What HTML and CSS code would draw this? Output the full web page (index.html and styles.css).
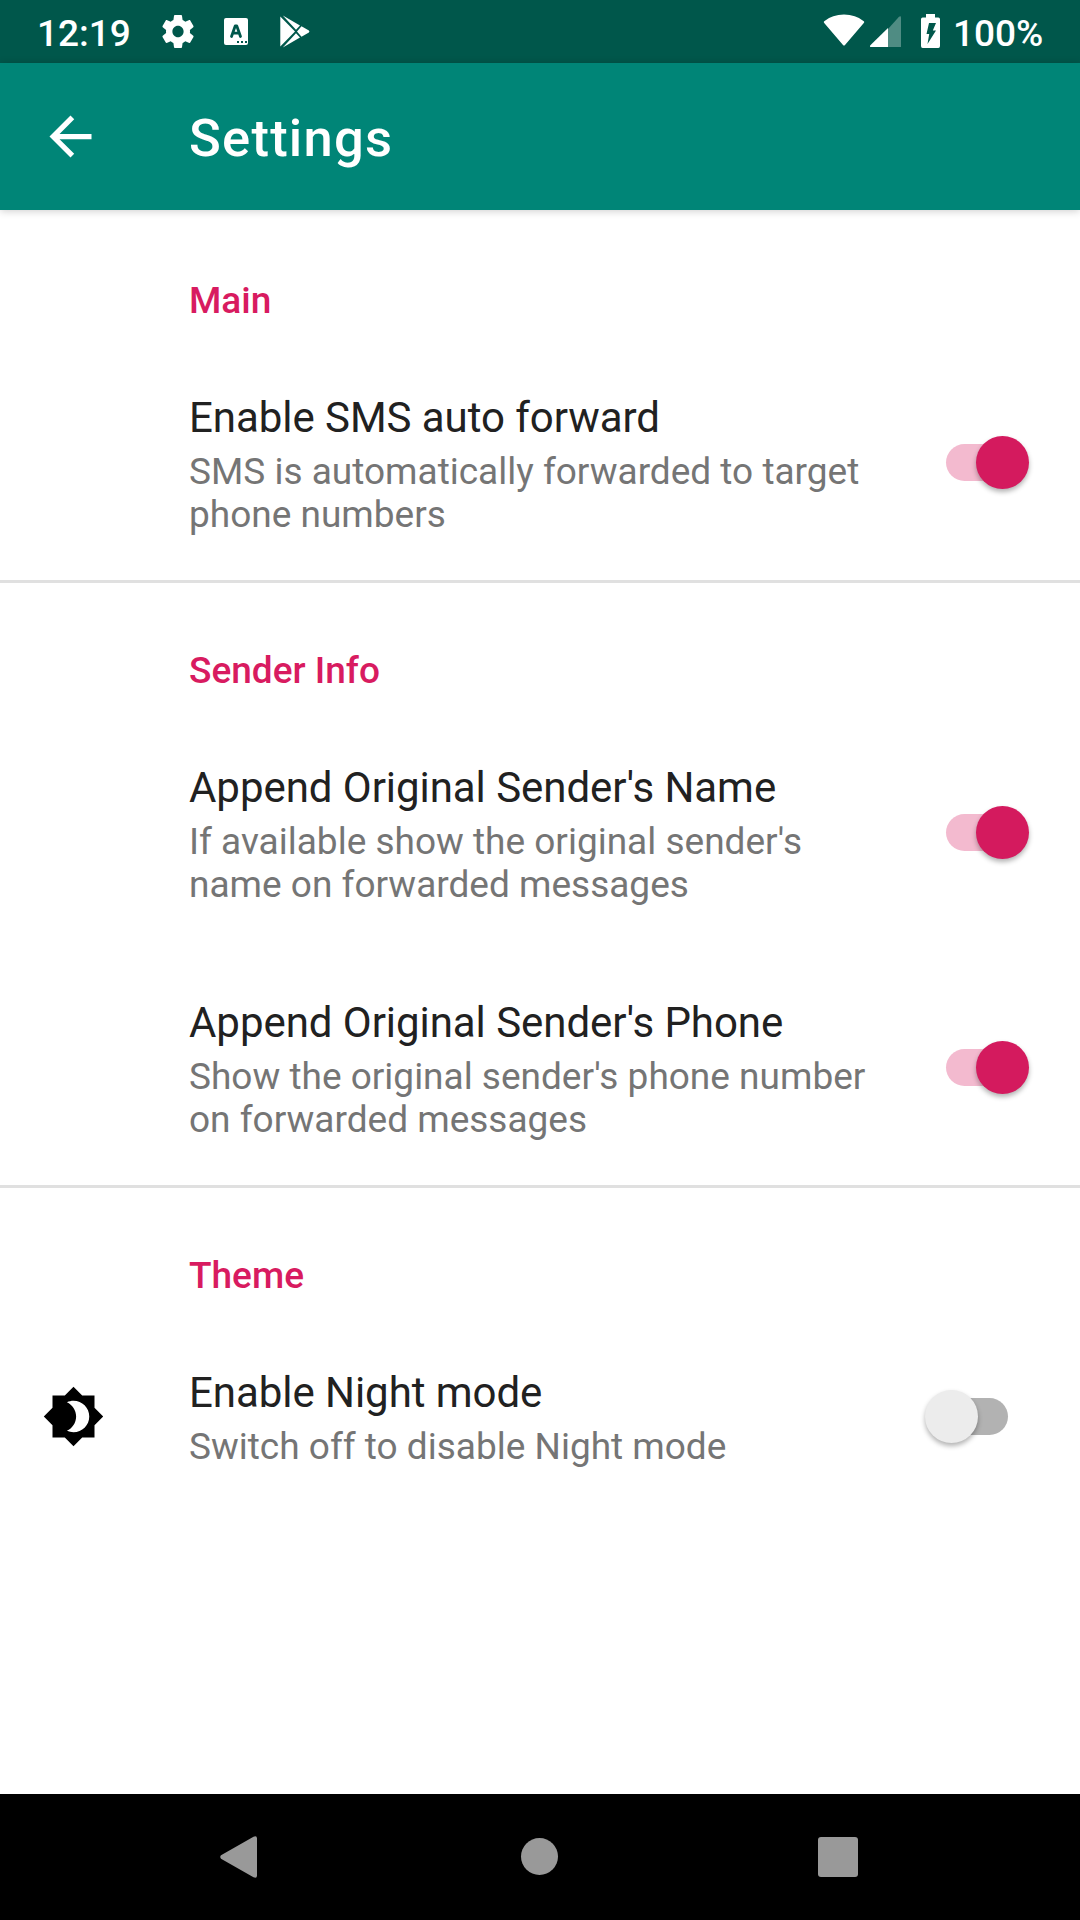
FILE: index.html
```html
<!DOCTYPE html>
<html lang="en">
<head>
<meta charset="utf-8">
<title>Settings</title>
<link rel="stylesheet" href="styles.css">
</head>
<body>
<header class="status-bar">
  <span class="clock">12:19</span>
  <svg class="status-gear" viewBox="2 2 20 20" preserveAspectRatio="none"><path d="M19.43 12.98c.04-.32.07-.64.07-.98s-.03-.66-.07-.98l2.11-1.65c.19-.15.24-.42.12-.64l-2-3.46c-.12-.22-.39-.3-.61-.22l-2.49 1c-.52-.4-1.08-.73-1.69-.98l-.38-2.65C14.46 2.18 14.25 2 14 2h-4c-.25 0-.46.18-.49.42l-.38 2.65c-.61.25-1.17.59-1.69.98l-2.49-1c-.23-.09-.49 0-.61.22l-2 3.46c-.13.22-.07.49.12.64l2.11 1.65c-.04.32-.07.65-.07.98s.03.66.07.98l-2.11 1.65c-.19.15-.24.42-.12.64l2 3.46c.12.22.39.3.61.22l2.49-1c.52.4 1.08.73 1.69.98l.38 2.65c.03.24.24.42.49.42h4c.25 0 .46-.18.49-.42l.38-2.65c.61-.25 1.17-.59 1.69-.98l2.49 1c.23.09.49 0 .61-.22l2-3.46c.12-.22.07-.49-.12-.64l-2.11-1.65zM12 15.5c-1.93 0-3.5-1.57-3.5-3.5s1.57-3.5 3.5-3.5 3.5 1.57 3.5 3.5-1.57 3.5-3.5 3.5z"/></svg>
  <svg class="status-input" viewBox="0 0 24 27"><rect width="24" height="27" rx="2"/><path class="cut-line" d="M7.500 18.500 11.200 8h1.600l3.700 10.500M9 15.200h6"/><path class="cut" d="M13 23h2v2h-2zM17 23h2v2h-2zM21 23h2v2h-2z"/></svg>
  <svg class="status-play" viewBox="0 0 30 33"><path d="M.3 1.500 15 16.500.3 31.500zM2.800.4 20 10.400l-4 4.400zM2.800 32.600 20 22.600l-4-4.400zM21.500 11.300l7.400 4.300q1 .9 0 1.800l-7.400 4.300-4.500-5.200z"/></svg>
  <span class="spacer"></span>
  <svg class="status-wifi" viewBox="0 0 42 33"><path d="M1.200 9Q.2 8 1.200 7.200Q9.500.6 21 .6T40.800 7.200Q41.800 8 40.800 9L22 31q-1 1-2 0z"/></svg>
  <svg class="status-signal" viewBox="0 0 31 31"><path class="faint" d="M18 13 29 .8Q31 -.6 31 1.500V31H18z"/><path d="M18 12V31H1Q-.8 30.800 .6 29z"/></svg>
  <svg class="status-battery" viewBox="0 0 19 34"><path d="M5 0h9v3.500h3.300Q19 3.500 19 5.200v26.800Q19 34 17.300 34H1.700Q0 34 0 32V5.200Q0 3.500 1.700 3.500H5z"/><path class="cut" d="M8 9h7l-3.200 7.500H15L6.500 30l1.700-10H5.500z"/></svg>
  <span class="battery-level">100%</span>
</header>
<nav class="app-bar">
  <svg class="back" viewBox="0 0 24 24"><path d="M20 11H7.830l5.590-5.590L12 4l-8 8 8 8 1.410-1.410L7.830 13H20v-2z"/></svg>
  <h1 class="app-title">Settings</h1>
</nav>
<main class="preferences">
  <section class="category">
    <h2 class="category-title">Main</h2>
    <div class="preference">
      <div class="icon-slot"></div>
      <div class="copy"><div class="title">Enable SMS auto forward</div><div class="summary">SMS is automatically forwarded to target<br>phone numbers</div></div>
      <div class="switch on"><span class="thumb"></span></div>
    </div>
  </section>
  <section class="category divided">
    <h2 class="category-title">Sender Info</h2>
    <div class="preference">
      <div class="icon-slot"></div>
      <div class="copy"><div class="title">Append Original Sender's Name</div><div class="summary">If available show the original sender's<br>name on forwarded messages</div></div>
      <div class="switch on"><span class="thumb"></span></div>
    </div>
    <div class="preference">
      <div class="icon-slot"></div>
      <div class="copy"><div class="title">Append Original Sender's Phone</div><div class="summary">Show the original sender's phone number<br>on forwarded messages</div></div>
      <div class="switch on"><span class="thumb"></span></div>
    </div>
  </section>
  <section class="category divided">
    <h2 class="category-title">Theme</h2>
    <div class="preference">
      <div class="icon-slot"><svg class="night" viewBox="0 0 24 24"><path d="M20 8.690V4h-4.690L12 .690 8.690 4H4v4.690L.690 12 4 15.310V20h4.690L12 23.310 15.310 20H20v-4.690L23.310 12 20 8.690zM12 18c-.890 0-1.740-.200-2.500-.550C11.560 16.500 13 14.420 13 12s-1.440-4.500-3.500-5.450C10.260 6.200 11.110 6 12 6c3.310 0 6 2.690 6 6s-2.690 6-6 6z"/></svg></div>
      <div class="copy"><div class="title">Enable Night mode</div><div class="summary">Switch off to disable Night mode</div></div>
      <div class="switch"><span class="thumb"></span></div>
    </div>
  </section>
</main>
<footer class="nav-bar">
  <svg class="nav-back" viewBox="0 0 37 42"><path d="M1 19.300 33.500.700Q37-.800 37 2.500v37Q37 42.800 33.500 41.300L1 22.700q-1.500-1.700 0-3.400z"/></svg>
  <span class="nav-home"></span>
  <span class="nav-recent"></span>
</footer>
</body>
</html>
```
FILE: styles.css
```css
* { box-sizing: border-box; }
body {
  margin: 0;
  width: 1080px;
  height: 1920px;
  display: flex;
  flex-direction: column;
  overflow: hidden;
  background: #fff;
  font-family: Roboto, sans-serif;
}
svg { display: block; flex: none; }
h1, h2 { margin: 0; font-weight: 500; }

.status-bar {
  height: 63px;
  flex: none;
  display: flex;
  align-items: flex-start;
  padding: 0 37px 0 37px;
  background: #00574b;
  color: #fff;
  fill: #fff;
  font-size: 37px;
  font-weight: 500;
  line-height: 43px;
}
.clock { width: 125px; padding-top: 12px; white-space: nowrap; }
.status-gear { width: 32px; height: 33px; margin-top: 15px; }
.status-input { width: 24px; height: 27px; margin: 18px 0 0 30px; }
.status-play { width: 30px; height: 33px; margin: 15px 0 0 32px; }
.spacer { flex: 1; }
.status-wifi { width: 42px; height: 33px; margin-top: 14px; }
.status-signal { width: 31px; height: 31px; margin: 16px 0 0 5px; }
.status-battery { width: 19px; height: 34px; margin: 14px 0 0 20px; }
.battery-level { width: 90px; margin-left: 13px; padding-top: 12px; white-space: nowrap; }
.cut { fill: #00574b; }
.cut-line { fill: none; stroke: #00574b; stroke-width: 2.8; stroke-linejoin: round; stroke-linecap: round; }
.faint { fill: #4f8c83; }

.app-bar {
  height: 147px;
  flex: none;
  display: flex;
  align-items: center;
  padding-left: 39px;
  background: #008577;
  color: #fff;
  fill: #fff;
  box-shadow: 0 1px 8px rgba(0, 0, 0, .2);
}
.back { width: 63px; height: 63px; margin: 0 87px 1px 0; }
.app-title { padding-top: 3px; font-size: 52.5px; line-height: 62px; letter-spacing: 1.25px; }

.preferences { flex: 1; }
.category-title {
  height: 135px;
  padding: 69px 0 0 189px;
  color: #d81b60;
  font-size: 37px;
  line-height: 43px;
}
.divided { border-top: 3px solid #e0e0e0; }
.divided .category-title { height: 132px; padding-top: 66px; }
.preference {
  display: flex;
  align-items: center;
  padding: 0 72px 0 42px;
}
.icon-slot { width: 147px; flex: none; }
.night { width: 63px; height: 63px; }
.copy { flex: 1; padding: 48px 0 44px; white-space: nowrap; }
.title { color: #212121; font-size: 42px; line-height: 49px; letter-spacing: -.05px; }
.summary { padding-top: 8px; color: #757575; font-size: 37px; line-height: 43px; }

.switch {
  position: relative;
  width: 62px;
  height: 37px;
  border-radius: 19px;
  background: #b2b2b2;
}
.switch.on { background: #f3bacf; }
.thumb {
  position: absolute;
  left: -21px;
  top: -8px;
  width: 53px;
  height: 53px;
  border-radius: 50%;
  background: #ececec;
  box-shadow: 0 3px 5px rgba(0, 0, 0, .3);
}
.on .thumb { left: 30px; background: #d41a5e; }

.nav-bar {
  height: 126px;
  flex: none;
  display: flex;
  align-items: center;
  padding-left: 220px;
  background: #000;
  fill: #999;
}
.nav-back { width: 37px; height: 42px; }
.nav-home { width: 37px; height: 37px; margin: 0 0 1px 264px; border-radius: 50%; background: #999; }
.nav-recent { width: 40px; height: 40px; margin-left: 260px; border-radius: 3px; background: #999; }
```
